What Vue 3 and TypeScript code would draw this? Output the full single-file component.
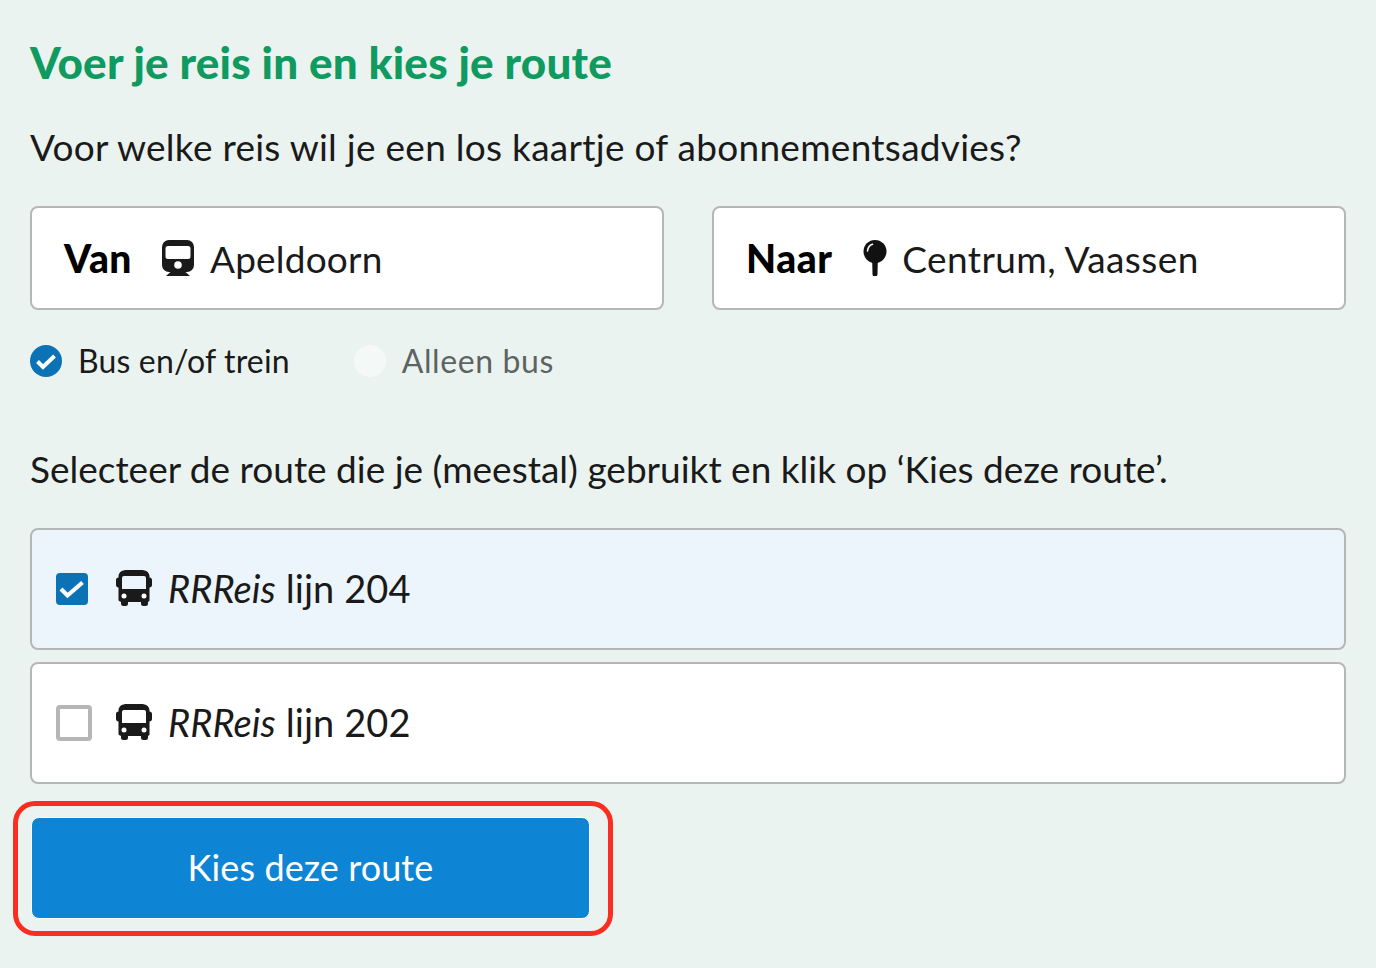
<script setup lang="ts">
interface Route { name: string; line: string; selected: boolean }
const routes: Route[] = [
  { name: 'RRReis', line: 'lijn 204', selected: true },
  { name: 'RRReis', line: 'lijn 202', selected: false },
]
</script>

<template>
  <main class="page">
    <h1 class="title">Voer je reis in en kies je route</h1>
    <p class="lead first">Voor welke reis wil je een los kaartje of abonnementsadvies?</p>

    <div class="fields">
      <div class="field from">
        <span class="label">Van</span>
        <svg class="ficon train" viewBox="0 0 32 36" width="32" height="36">
          <path fill="#1a1a1a" fill-rule="evenodd" d="M7 0h18a7 7 0 0 1 7 7v18a7 7 0 0 1-7 7h-1.500l4.500 4H4l4.500-4H7a7 7 0 0 1-7-7V7a7 7 0 0 1 7-7zM6 6a2.500 2.500 0 0 0-2.500 2.500v8A2.500 2.500 0 0 0 6 19h20a2.500 2.500 0 0 0 2.500-2.500v-8A2.500 2.500 0 0 0 26 6z"/>
          <circle cx="16" cy="25" r="3.800" fill="#fff"/>
        </svg>
        <span class="value">Apeldoorn</span>
      </div>
      <div class="field">
        <span class="label">Naar</span>
        <svg class="ficon pin" viewBox="0 0 24 36" width="24" height="36">
          <circle cx="12" cy="11.500" r="11.500" fill="#111"/>
          <path d="M4.500 11C4.800 7.500 7 5 9.500 4.200" fill="none" stroke="#fff" stroke-width="1.600" stroke-linecap="round"/>
          <path fill="#111" d="M9.200 21h5.600l-.3 13a2.500 2.500 0 0 1-5 0z"/>
        </svg>
        <span class="value">Centrum, Vaassen</span>
      </div>
    </div>

    <div class="modes">
      <label class="mode">
        <svg viewBox="0 0 32 32" width="32" height="32">
          <circle cx="16" cy="16" r="16" fill="#0b72b5"/>
          <path d="M7.500 16.500l5.500 5.500L24.500 11" fill="none" stroke="#fff" stroke-width="4"/>
        </svg>
        <span>Bus en/of trein</span>
      </label>
      <label class="mode off">
        <span class="dot"></span>
        <span>Alleen bus</span>
      </label>
    </div>

    <p class="lead second">Selecteer de route die je (meestal) gebruikt en klik op ‘Kies deze route’.</p>

    <div class="routes">
      <div v-for="r in routes" :key="r.line" class="route" :class="{ selected: r.selected }">
        <span class="box" :class="{ on: r.selected }">
          <svg v-if="r.selected" viewBox="0 0 32 32" width="32" height="32">
            <path d="M5 16l6.500 6.500L26.500 9.500" fill="none" stroke="#fff" stroke-width="4.200"/>
          </svg>
        </span>
        <svg class="bus" viewBox="0 0 36 36" width="36" height="36">
          <path fill="#1a1a1a" fill-rule="evenodd" d="M11 0h14c5 0 8 2 8.500 6v1.500c1.500 0 2.500 1 2.500 2.500v5c0 1.500-1 2.500-2.500 2.500V30c0 1-.5 1.500-1.500 2v1.500a2.500 2.500 0 0 1-2.500 2.500h-2a2.500 2.500 0 0 1-2.500-2.500V32H12v1.500A2.500 2.500 0 0 1 9.500 36h-2A2.500 2.500 0 0 1 5 33.500V32c-1-.5-2.500-1-2.500-2V17.500C1 17.500 0 16.500 0 15v-5c0-1.500 1-2.500 2.500-2.500V6C3 2 6 0 11 0zM8 6a2 2 0 0 0-2 2v11h24V8a2 2 0 0 0-2-2z"/>
          <circle cx="8" cy="26" r="2.500" fill="#fff"/>
          <circle cx="28" cy="26" r="2.500" fill="#fff"/>
        </svg>
        <span class="rname"><em>{{ r.name }}</em> {{ r.line }}</span>
      </div>
    </div>

    <div class="highlight">
      <button class="cta" type="button">Kies deze route</button>
    </div>
  </main>
</template>

<style>
html, body { margin: 0; background: #ebf3f0; }
</style>

<style scoped>
.page {
  box-sizing: border-box;
  height: 968px;
  padding: 38px 30px 0;
  background: #ebf3f0;
  color: #1a1a1a;
  font-family: "Lato", "Noto Sans", sans-serif;
  overflow: hidden;
}
.title {
  margin: 0;
  font-size: 44px;
  line-height: 48px;
  font-weight: 900;
  letter-spacing: 0.2px;
  color: #0f9a60;
}
.lead {
  margin: 39px 0 0;
  font-size: 37px;
  line-height: 44px;
}
.first { letter-spacing: 0.27px; }
.second { margin-top: 70px; }
.fields {
  display: grid;
  grid-template-columns: 1fr 1fr;
  gap: 48px;
  margin-top: 37px;
}
.field {
  box-sizing: border-box;
  height: 104px;
  display: flex;
  align-items: center;
  padding: 0 32px;
  background: #fff;
  border: 2px solid #b3b8b6;
  border-radius: 8px;
  font-size: 37px;
  letter-spacing: 0.3px;
}
.label { font-size: 39px; font-weight: 900; color: #000; margin-right: 31px; letter-spacing: 0.5px; }
.from .label { margin-right: 30px; }
.ficon { flex: none; margin-right: 16px; }
.pin { margin-right: 15px; }
.value { letter-spacing: 0.4px; }
.from .value { letter-spacing: 0.2px; }
.modes {
  display: flex;
  gap: 64px;
  margin-top: 35px;
  font-size: 32px;
  line-height: 32px;
  height: 32px;
  letter-spacing: 0.15px;
}
.mode { display: flex; align-items: center; gap: 16px; }
.mode.off { color: #5c6361; letter-spacing: 0.6px; }
.dot {
  width: 32px;
  height: 32px;
  border-radius: 50%;
  background: #f4f8f6;
}
.routes { display: flex; flex-direction: column; gap: 12px; margin-top: 37px; }
.route {
  box-sizing: border-box;
  height: 122px;
  display: flex;
  align-items: center;
  padding: 0 24px;
  background: #fff;
  border: 2px solid #b3b8b6;
  border-radius: 8px;
  font-size: 38px;
}
.route.selected { background: #edf5fc; }
.rname { letter-spacing: 0.07px; padding-bottom: 2px; }
.box {
  box-sizing: border-box;
  flex: none;
  width: 36px;
  height: 36px;
  border: 4px solid #b6b6b6;
  border-radius: 4px;
  margin-right: 24px;
  background: transparent;
}
.box.on {
  width: 32px;
  height: 32px;
  border: 0;
  background: #0b72b5;
  margin-right: 28px;
}
.box svg { display: block; }
.bus { flex: none; margin-right: 16px; margin-bottom: 2px; }
.highlight {
  box-sizing: border-box;
  width: 600px;
  height: 135px;
  margin: 17px 0 0 -17px;
  padding: 11px 18px 12px 13px;
  border: 5px solid #f92e20;
  border-radius: 22px;
}
.cta {
  display: block;
  box-sizing: border-box;
  width: 100%;
  height: 102px;
  padding: 0 0 2px;
  border: 1px solid #fff;
  border-radius: 8px;
  background: #0d85d4;
  color: #fff;
  font-family: inherit;
  font-size: 36px;
  letter-spacing: 0.1px;
}
</style>
